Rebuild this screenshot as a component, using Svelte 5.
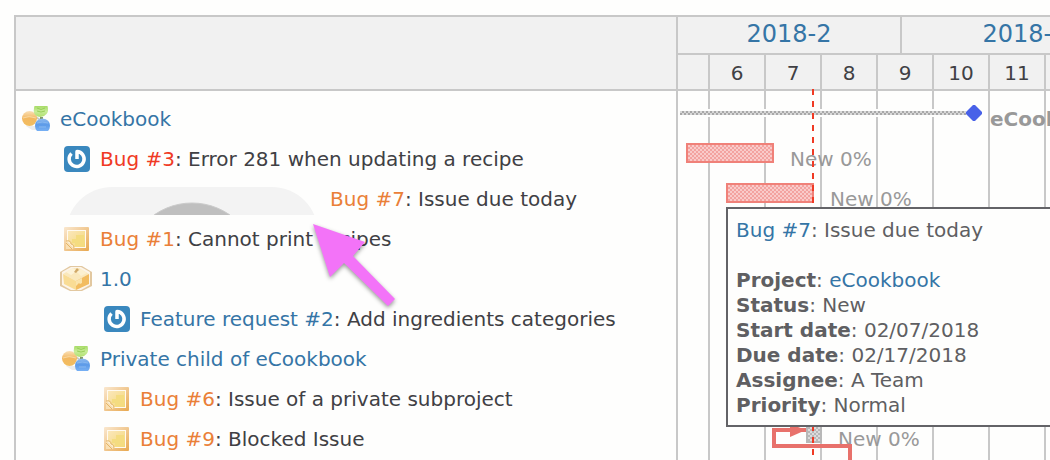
<script>
    // Each week is 7 days at 8px per day, the first one is cut by the start of the chart
    const months = [
        { label: '2018-2', width: 224 },
        { label: '2018-3', width: 248 }
    ];

    const weeks = [
        { label: '', width: 32 },
        { label: '6', width: 56 },
        { label: '7', width: 56 },
        { label: '8', width: 56 },
        { label: '9', width: 56 },
        { label: '10', width: 56 },
        { label: '11', width: 56 },
        { label: '', width: 56 }
    ];

    const rows = [
        { icon: 'project', level: 0, link: 'eCookbook', bar: { kind: 'parent', start: 2, width: 286, label: 'eCookbook' } },
        { icon: 'power', level: 1, link: 'Bug #3', state: 'overdue', subject: 'Error 281 when updating a recipe', bar: { kind: 'late', start: 8, width: 88, label: 'New 0%' } },
        { icon: 'avatar', level: 1, link: 'Bug #7', state: 'open', subject: 'Issue due today', bar: { kind: 'late', start: 48, width: 88, label: 'New 0%' } },
        { icon: 'note', level: 1, link: 'Bug #1', state: 'open', subject: 'Cannot print recipes' },
        { icon: 'package', level: 1, link: '1.0' },
        { icon: 'power', level: 2, link: 'Feature request #2', subject: 'Add ingredients categories' },
        { icon: 'project', level: 1, link: 'Private child of eCookbook' },
        { icon: 'note', level: 2, link: 'Bug #6', state: 'open', subject: 'Issue of a private subproject' },
        { icon: 'note', level: 2, link: 'Bug #9', state: 'open', subject: 'Blocked Issue', bar: { kind: 'todo', start: 128, width: 16, label: 'New 0%' } }
    ];

    const details = [
        { name: 'Project', value: 'eCookbook', href: '#project' },
        { name: 'Status', value: 'New' },
        { name: 'Start date', value: '02/07/2018' },
        { name: 'Due date', value: '02/17/2018' },
        { name: 'Assignee', value: 'A Team' },
        { name: 'Priority', value: 'Normal' }
    ];

    const today = 134;
</script>

<div class="gantt">
    <div class="subjects">
        <div class="subjects-header"></div>
        <div class="rows">
            {#each rows as row}
                <div class="row" style="padding-left: {4 + row.level * 40}px">
                    {#if row.icon === 'project'}
                        <svg class="icon" viewBox="0 0 32 28">
                            <defs>
                                <linearGradient id="orange" x2="0" y2="1"><stop offset="0" stop-color="#fae0b8" /><stop offset=".5" stop-color="#f3b860" /><stop offset="1" stop-color="#f2be60" /></linearGradient>
                                <linearGradient id="green" x2="0" y2="1"><stop offset="0" stop-color="#a8dc68" /><stop offset=".5" stop-color="#c8ec98" /><stop offset="1" stop-color="#b0e070" /></linearGradient>
                                <linearGradient id="blue" x2="0" y2="1"><stop offset="0" stop-color="#90bcf0" /><stop offset=".5" stop-color="#5c9ae8" /><stop offset="1" stop-color="#78b0f4" /></linearGradient>
                            </defs>
                            <path d="M6 21h10v4h-4z" fill="#ececec" />
                            <path d="M14 11l8 5" stroke="#c8c8c0" stroke-width="2" />
                            <circle cx="9.500" cy="13.500" r="7.500" fill="url(#orange)" />
                            <path d="M3 13q6-3 13 0" stroke="#f8d8a0" fill="none" />
                            <path d="M14.500 1h13q1.500 5-1 8-2.500 3-6 3-4 0-6-3-1.500-3 0-8z" fill="url(#green)" />
                            <path d="M17 3q4 3 8 0M17 6q4 2 8 0" stroke="#98d058" fill="none" />
                            <path d="M20 12h3v2h-3z" fill="#80986c" />
                            <path d="M17 26q-2-2-2-5 0-7 7.500-7.500 7.500 .5 7.500 7.500 0 3-2 5z" fill="url(#blue)" />
                            <path d="M17 18q5-2 11 0M19 22h7" stroke="#88b8f0" fill="none" />
                        </svg>
                    {:else if row.icon === 'power'}
                        <svg class="icon" viewBox="0 0 32 28">
                            <rect x="4" y="1" width="26" height="26" rx="4" fill="#3a88be" />
                            <path d="M17 14V6.500A7.500 7.500 0 1 1 11.500 8.500" stroke="#fff" stroke-width="3.500" stroke-linejoin="round" fill="none" />
                        </svg>
                    {:else if row.icon === 'note'}
                        <svg class="icon" viewBox="0 0 32 28">
                            <defs>
                                <linearGradient id="frame" x2="1" y2="1"><stop offset="0" stop-color="#fae8d0" /><stop offset="1" stop-color="#e8a850" /></linearGradient>
                                <linearGradient id="paper" x2="1" y2="1"><stop offset="0" stop-color="#fbe7bb" /><stop offset="1" stop-color="#f4d878" /></linearGradient>
                            </defs>
                            <rect x="4" y="2" width="25" height="24" rx="1" fill="url(#frame)" />
                            <path d="M7 5h19v18H13l-6-6z" fill="#fffaf0" />
                            <path d="M8 6h17v16H14l-6-6z" fill="url(#paper)" />
                            <path d="M19 10h5v11h-9v-3h-3v-4h4v-4z" fill="#f4dc80" />
                            <path d="M6 15l9 9H6z" fill="#f9e0b4" />
                            <path d="M6 16q5-1 5 3 3 0 3 5M6 18l6 6" fill="none" stroke="#e4b468" />
                        </svg>
                    {:else if row.icon === 'package'}
                        <svg class="icon" viewBox="0 0 32 28">
                            <path d="M10 1h12l10 6v14l-10 5H10L0 21V7z" fill="#e2c8a0" />
                            <path d="M11 2h10l9 5v13l-9 5H11l-9-5V7z" fill="#fcf4e8" />
                            <path d="M3 9l10-6h6l10 6-13 7z" fill="#fae8bc" />
                            <path d="M3 9l13 7v9L4 19z" fill="#f9dc94" />
                            <path d="M16 16l13-7v10l-13 6z" fill="#f2bc60" />
                            <path d="M6 7l7-4 4 3-6 4z" fill="#fdf3d8" />
                            <path d="M14 7l3-4 2 2-3 3z" fill="#d0a868" />
                            <path d="M17 7l4-3 6 4-6 3z" fill="#fcf0d0" />
                            <path d="M16 16l6-3v5l-2 1-1-1-3 3z" fill="#fae4ac" />
                        </svg>
                    {:else}
                        <svg class="avatar" viewBox="0 0 262 32">
                            <rect x="6" y="4" width="252" height="256" rx="46" fill="#f3f3f3" />
                            <circle cx="132" cy="86" r="66" fill="#bfbfbf" stroke="#cbcbcb" />
                        </svg>
                    {/if}
                    <span class="subject">
                        <a href="#{row.link}" class={row.state}>{row.link}</a>{#if row.subject}: {row.subject}{/if}
                    </span>
                </div>
            {/each}
        </div>
    </div>

    <div class="chart">
        <div class="months">
            {#each months as month}
                <div class="cell" style="width: {month.width}px"><a href="#{month.label}">{month.label}</a></div>
            {/each}
        </div>
        <div class="weeks">
            {#each weeks as week}
                <div class="cell" style="width: {week.width}px">{week.label}</div>
            {/each}
        </div>

        <div class="timeline">
            <div class="grid">
                {#each weeks as week}
                    <div class="line" style="width: {week.width}px"></div>
                {/each}
            </div>

            <div class="rows">
                {#each rows as row}
                    <div class="row bar-row">
                        {#if row.bar}
                            <div class="bar {row.bar.kind}" style="margin-left: {row.bar.start}px; width: {row.bar.width}px"></div>
                            {#if row.bar.kind === 'parent'}
                                <svg class="marker" viewBox="0 0 16 16"><path d="M7 0h2l7 7v2l-7 7H7L0 9V7z" fill="#4861e8" /></svg>
                            {/if}
                            <span class="bar-label" class:strong={row.bar.kind === 'parent'}>{row.bar.label}</span>
                        {/if}
                    </div>
                {/each}
            </div>

            <div class="today" style="left: {today}px"></div>

            <!-- Precedes relation going into Bug #9 -->
            <svg class="relation" viewBox="0 0 80 60">
                <path d="M34 6H2v16h76v38" fill="none" stroke="#e8716b" stroke-width="4" />
                <path d="M18 0l16 6-16 7z" fill="#e8716b" />
            </svg>

            <div class="tooltip">
                <a href="#issue-7">Bug #7</a>: Issue due today<br /><br />
                {#each details as item}
                    <div><strong>{item.name}</strong>: {#if item.href}<a href={item.href}>{item.value}</a>{:else}{item.value}{/if}</div>
                {/each}
            </div>
        </div>
    </div>

    <svg class="pointer" viewBox="0 0 92 92">
        <path d="M3 3l52 18-12 14 42 43-7 7-44-43-14 14z" fill="#f373f8" />
    </svg>
</div>

<style>
    :global(body) {
        background: #fefefd;
        overflow: hidden;
    }

    .gantt {
        position: relative;
        display: flex;
        min-height: calc(100vh - 15px);
        margin: 15px 0 0 14px;
        box-sizing: border-box;
        border: 2px solid #c8c8c8;
        border-width: 2px 0 0 2px;
        font-family: Verdana, 'DejaVu Sans', sans-serif;
        font-size: 20px;
        line-height: 25px;
        color: #404044;
    }

    a {
        color: #3575a6;
        text-decoration: none;
    }

    a:hover {
        text-decoration: underline;
    }

    a.overdue {
        color: #f03a24;
    }

    a.open {
        color: #ea8038;
    }

    .subjects {
        flex: 0 0 660px;
        border-right: 2px solid #c8c8c8;
    }

    .subjects-header {
        height: 72px;
        background: #f1f1f1;
        border-bottom: 2px solid #c8c8c8;
    }

    .rows {
        padding-top: 8px;
    }

    .row {
        display: flex;
        align-items: center;
        gap: 8px;
        height: 40px;
        white-space: nowrap;
    }

    .icon {
        flex: none;
        width: 32px;
        height: 28px;
    }

    .avatar {
        flex: none;
        width: 262px;
        height: 32px;
    }

    .chart {
        flex: 1;
        min-width: 0;
        display: flex;
        flex-direction: column;
        overflow: hidden;
    }

    .months,
    .weeks {
        display: flex;
        background: #f1f1f1;
        border-bottom: 2px solid #c8c8c8;
    }

    .months {
        height: 36px;
        font-size: 24px;
        line-height: 34px;
    }

    .weeks {
        height: 34px;
        line-height: 36px;
    }

    .cell,
    .line {
        flex: none;
        box-sizing: border-box;
        border-right: 2px solid #c8c8c8;
        text-align: center;
    }

    .timeline {
        position: relative;
        flex: 1;
    }

    .grid {
        position: absolute;
        inset: 0;
        display: flex;
    }

    .bar-row {
        position: relative;
        align-items: flex-start;
        gap: 0;
    }

    .bar {
        flex: none;
        box-sizing: border-box;
        height: 20px;
        margin-top: 4px;
    }

    .late {
        border: 2px solid #f08179;
        background: repeating-conic-gradient(#f3a3a0 0 25%, #f9cbca 0 50%) 0 0 / 4px 4px;
    }

    .todo {
        border: 2px solid #b8b8b8;
        background: repeating-conic-gradient(#b8b8b8 0 25%, #dcdcdc 0 50%) 0 0 / 4px 4px;
    }

    .parent {
        height: 8px;
        margin-top: 10px;
        border: 2px solid #fefefd;
        border-width: 2px 0;
        background: repeating-conic-gradient(#a8a8a8 0 25%, #d8d8d8 0 50%) 0 0 / 4px 4px;
    }

    .marker {
        flex: none;
        width: 16px;
        height: 16px;
        margin-top: 6px;
    }

    .bar-label {
        margin-left: 16px;
        line-height: 40px;
        color: #999;
    }

    .bar-label.strong {
        margin-left: 8px;
        font-weight: bold;
    }

    .today {
        position: absolute;
        top: -2px;
        bottom: 0;
        width: 2px;
        background: repeating-linear-gradient(#f03a24 0 6px, transparent 6px 12px);
    }

    .relation {
        position: absolute;
        top: 333px;
        left: 94px;
        width: 80px;
        height: 60px;
    }

    .tooltip {
        position: absolute;
        top: 116px;
        left: 48px;
        width: 600px;
        box-sizing: border-box;
        padding: 9px 8px 7px;
        border: 2px solid #636367;
        background: #fefefd;
        color: #5f5f62;
    }

    .pointer {
        position: absolute;
        top: 204px;
        left: 294px;
        width: 92px;
        height: 92px;
        filter: drop-shadow(0 2px 2px rgba(0, 0, 0, 0.4));
    }
</style>
